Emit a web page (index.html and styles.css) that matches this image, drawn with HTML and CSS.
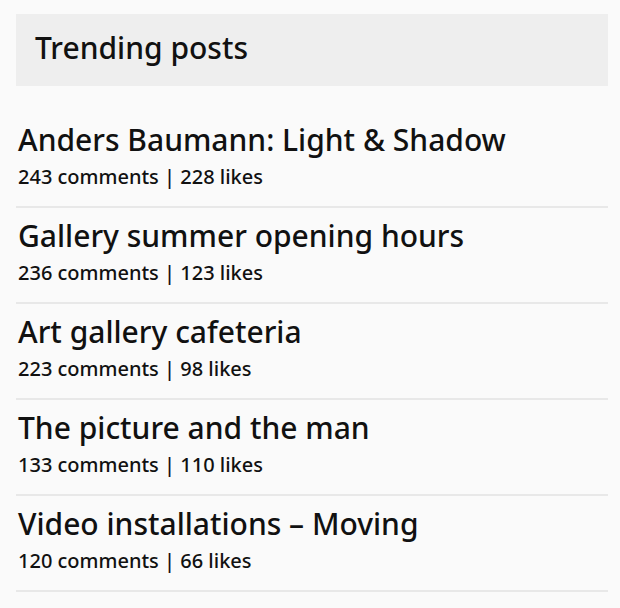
FILE: index.html
```html
<!DOCTYPE html>
<html lang="en">
<head>
<meta charset="utf-8">
<title>Trending posts</title>
<link rel="stylesheet" href="styles.css">
</head>
<body>
<section class="trending">
  <h2 class="trending-header">Trending posts</h2>
  <ul class="post-list">
    <li class="post">
      <a class="post-title" href="#">Anders Baumann: Light &amp; Shadow</a>
      <div class="post-meta">243 comments | 228 likes</div>
    </li>
    <li class="post">
      <a class="post-title" href="#">Gallery summer opening hours</a>
      <div class="post-meta">236 comments | 123 likes</div>
    </li>
    <li class="post">
      <a class="post-title" href="#">Art gallery cafeteria</a>
      <div class="post-meta">223 comments | 98 likes</div>
    </li>
    <li class="post">
      <a class="post-title" href="#">The picture and the man</a>
      <div class="post-meta">133 comments | 110 likes</div>
    </li>
    <li class="post">
      <a class="post-title" href="#">Video installations – Moving</a>
      <div class="post-meta">120 comments | 66 likes</div>
    </li>
  </ul>
</section>
</body>
</html>
```

FILE: styles.css
```css
html, body {
  margin: 0;
  padding: 0;
  background: #fafafa;
}

body {
  font-family: "Noto Sans", "Open Sans", sans-serif;
  color: #111;
  padding: 14px 12px 0 16px;
}

.trending {
  display: flex;
  flex-direction: column;
}

.trending-header {
  margin: 0;
  height: 72px;
  box-sizing: border-box;
  background: #eeeeee;
  padding: 0 19px 4px;
  display: flex;
  align-items: center;
  font-size: 30px;
  line-height: 40px;
  font-weight: 500;
}

.post-list {
  list-style: none;
  margin: 26px 0 0;
  padding: 0;
}

.post {
  display: flex;
  flex-direction: column;
  gap: 4px;
  padding: 8px 0 16px 2px;
  border-bottom: 2px solid #e8e8e8;
}

.post-title {
  color: #111;
  text-decoration: none;
  font-size: 30px;
  line-height: 40px;
  font-weight: 500;
}

.post-meta {
  font-size: 20px;
  line-height: 26px;
  font-weight: 500;
}
```
